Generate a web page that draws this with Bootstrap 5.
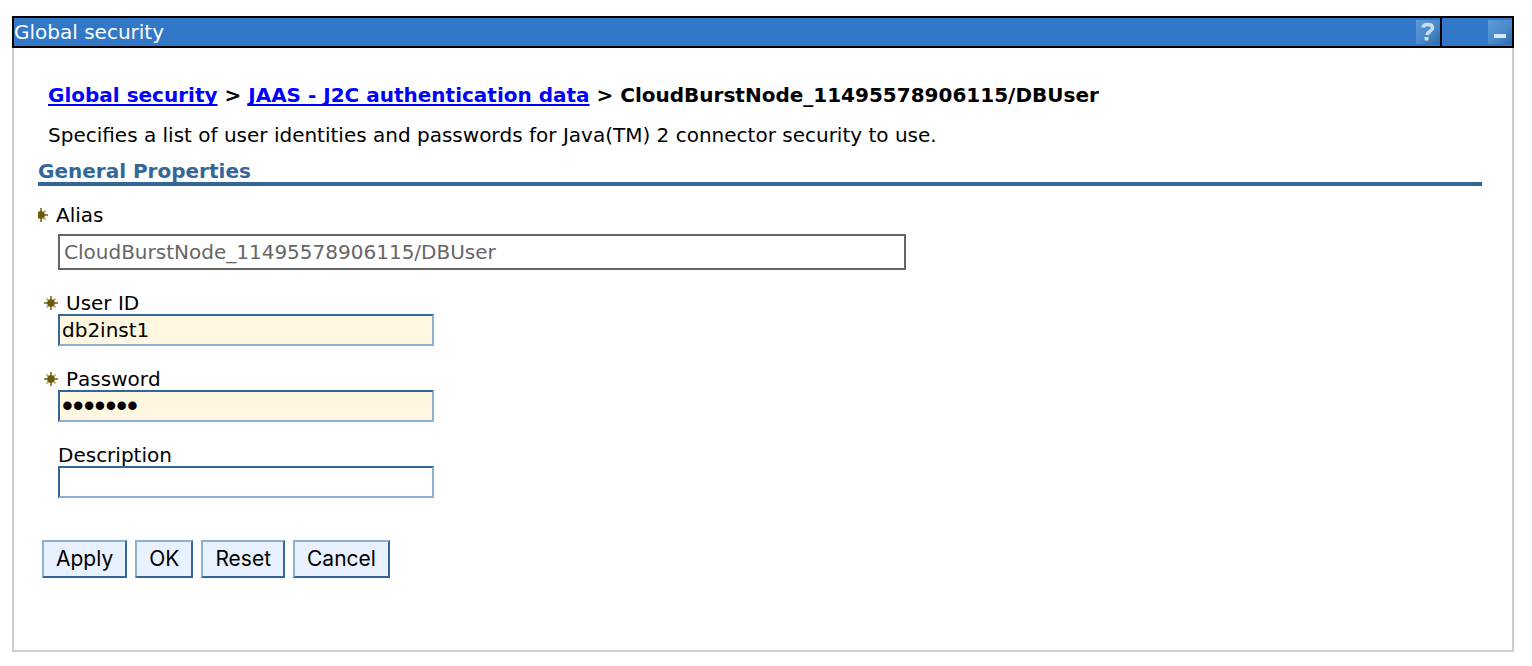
<!DOCTYPE html>
<html lang="en">
<head>
<meta charset="utf-8">
<meta name="viewport" content="width=device-width, initial-scale=1">
<title>Global security</title>
<link href="https://cdn.jsdelivr.net/npm/bootstrap@5.3.0/dist/css/bootstrap.min.css" rel="stylesheet">
<style>
  body { font-family: Verdana, "DejaVu Sans", sans-serif; font-size: 20px; line-height: 22px; font-kerning: none; color: #000; background: #fff; }
  .portlet { margin: 16px 18px 14px 12px; }
  .portlet-bar { background: #3178c8; border: 2px solid #000; height: 32px; color: #fff; }
  .tool-cell { width: 72px; border-left: 2px solid #000; }
  .tool-btn { width: 24px; height: 24px; }
  .portlet-body { border: 2px solid #ccc; border-top: 0; padding: 36px 30px 72px 24px; }
  .trail { font-size: 20px; line-height: 22px; font-weight: 700; margin: 0 0 18px 10px; }
  .trail a { color: #00f; text-underline-offset: 2px; text-decoration-skip-ink: none; }
  .intro { margin: 0 0 14px 10px; }
  .section-title { font-size: 20px; line-height: 22px; font-weight: 700; color: #369; border-bottom: 4px solid #369; margin: 0 0 18px; }
  .entry { margin-bottom: 22px; padding-left: 20px; }
  .entry label { display: flex; align-items: center; gap: 8px; }
  .required label { margin-left: -14px; }
  .required .alias-label { margin-left: -20px; margin-bottom: 8px; }
  .field { border-radius: 0; border: 2px solid; border-color: #369 #8cb1d1 #8cb1d1 #369; height: 32px; max-width: 376px; padding: 0 2px; font-size: 20px; line-height: 22px; color: #000; background: #fff; }
  .required .field { background: #fff7df; }
  .required .field-alias:disabled { height: 36px; max-width: 848px; border-color: #666; color: #666; background: #fff; padding: 0 4px; opacity: 1; }
  .field[type="password"] { font-family: "Liberation Sans", Arial, sans-serif; font-size: 31px; }
  .actions { margin: 42px 0 0 4px; gap: 8px; }
  .action { border-radius: 0; border: 2px solid; border-color: #8cb1d1 #369 #369 #8cb1d1; background: #e8f1ff; color: #000; height: 38px; padding: 0 12px; font-family: Inter, sans-serif; font-size: 21px; line-height: 24px; }
</style>
</head>
<body>
<svg class="d-none" aria-hidden="true">
  <symbol id="star" viewBox="0 0 14 14">
    <path d="M2.500 2.500l9 9M11.500 2.500l-9 9" stroke="#b9b07c" stroke-width="2"/>
    <path d="M7 0v14M0 7h14" stroke="#938745" stroke-width="2"/>
    <circle cx="7" cy="7" r="3.800" fill="#6b5a0c"/>
  </symbol>
</svg>
<main class="portlet">
  <header class="portlet-bar d-flex">
    <div class="flex-grow-1 d-flex justify-content-between align-items-center">
      <span>Global security</span>
      <button type="button" class="tool-btn btn p-0 border-0 d-flex" aria-label="Help">
        <svg width="24" height="24" viewBox="0 0 24 24" aria-hidden="true">
          <defs><linearGradient id="face" x1="0" y1="0" x2="1" y2="1"><stop offset="0" stop-color="#5c9bd8"/><stop offset=".55" stop-color="#498acb"/><stop offset="1" stop-color="#2f69a8"/></linearGradient></defs>
          <path fill="url(#face)" d="M0 0h24v24H0z"/>
          <path d="M7 7.500C7.500 5 9.500 4.500 12 4.500c3 0 4.500 1.500 4.500 3.500 0 3-5 3.500-5.500 7" fill="none" stroke="#c9def2" stroke-width="3.500"/>
          <path fill="#c9def2" d="M8.500 17h4v3.500h-4z"/>
        </svg>
      </button>
    </div>
    <div class="tool-cell d-flex justify-content-end align-items-center">
      <button type="button" class="tool-btn btn p-0 border-0 d-flex" aria-label="Minimize">
        <svg width="24" height="24" viewBox="0 0 24 24" aria-hidden="true">
          <path fill="url(#face)" d="M0 0h24v24H0z"/>
          <rect x="6" y="14" width="12" height="4" fill="#d5e6f6"/>
        </svg>
      </button>
    </div>
  </header>
  <div class="portlet-body">
    <h1 class="trail"><a href="#">Global security</a> &gt; <a href="#">JAAS - J2C authentication data</a> &gt; CloudBurstNode_11495578906115/DBUser</h1>
    <p class="intro">Specifies a list of user identities and passwords for Java(TM) 2 connector security to use.</p>
    <form>
      <h2 class="section-title">General Properties</h2>
      <div class="entry required">
        <label class="alias-label" for="alias"><svg width="10" height="14" viewBox="4 0 10 14" aria-hidden="true"><use href="#star" width="14" height="14"/></svg>Alias</label>
        <input class="form-control field field-alias" id="alias" type="text" value="CloudBurstNode_11495578906115/DBUser" disabled>
      </div>
      <div class="entry required">
        <label for="userid"><svg width="14" height="14" aria-hidden="true"><use href="#star"/></svg>User ID</label>
        <input class="form-control field" id="userid" type="text" value="db2inst1">
      </div>
      <div class="entry required">
        <label for="password"><svg width="14" height="14" aria-hidden="true"><use href="#star"/></svg>Password</label>
        <input class="form-control field" id="password" type="password" value="db2inst">
      </div>
      <div class="entry">
        <label for="description">Description</label>
        <input class="form-control field" id="description" type="text">
      </div>
      <div class="actions d-flex flex-wrap">
        <button type="button" class="btn action">Apply</button>
        <button type="button" class="btn action">OK</button>
        <button type="reset" class="btn action">Reset</button>
        <button type="button" class="btn action">Cancel</button>
      </div>
    </form>
  </div>
</main>
<script src="https://cdn.jsdelivr.net/npm/bootstrap@5.3.0/dist/js/bootstrap.bundle.min.js"></script>
</body>
</html>
